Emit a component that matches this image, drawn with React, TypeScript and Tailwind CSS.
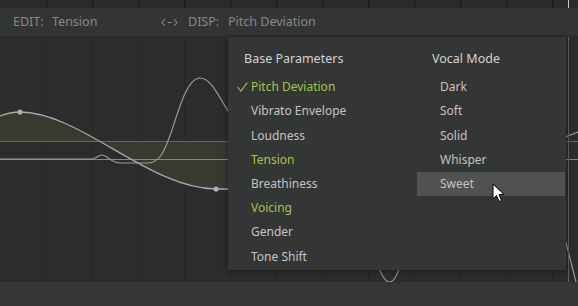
import React from "react";

const gridXs = Array.from({ length: 13 }, (_, i) => (i + 1) * 46);

function Cursor() {
  return (
    <svg width="13" height="20" viewBox="0 0 13 20" className="absolute left-[492px] top-[183px]">
      <path d="M1,1 L1,16 L4.5,12.5 L7,18.5 L9.5,17.5 L7,11.5 L12,11.5 Z" fill="#ffffff" stroke="#000000" strokeWidth="1" strokeLinejoin="miter" />
    </svg>
  );
}

function Row({ children, className = "" }: { children: React.ReactNode; className?: string }) {
  return <div className={"h-[24.2px] flex items-center shrink-0 " + className}>{children}</div>;
}

export default function App() {
  const left: { t: string; green?: boolean; check?: boolean }[] = [
    { t: "Pitch Deviation", green: true, check: true },
    { t: "Vibrato Envelope" },
    { t: "Loudness" },
    { t: "Tension", green: true },
    { t: "Breathiness" },
    { t: "Voicing", green: true },
    { t: "Gender" },
    { t: "Tone Shift" },
  ];
  const right = ["Dark", "Soft", "Solid", "Whisper", "Sweet"];
  return (
    <div
      className="relative w-[578px] h-[306px] overflow-hidden flex flex-col bg-[#2b2c2c] text-[12px]"
      style={{ fontFamily: '"Noto Sans", "Open Sans", sans-serif' }}
    >
      {/* top strip */}
      <div className="h-[8px] shrink-0 bg-[#2a2b2b] relative">
        <svg width="578" height="8" className="block">
          {gridXs.map((x) => (
            <line key={x} x1={x + 0.5} y1="0" x2={x + 0.5} y2="8" stroke="#1c1d1d" />
          ))}
          <line x1="568.5" y1="0" x2="568.5" y2="8" stroke="#c8c8c8" />
        </svg>
      </div>
      {/* toolbar */}
      <div className="h-[29px] shrink-0 bg-[#333534] flex items-center pt-[1px] text-[#878988] text-[12.5px] border-b border-[#2a2b2b]">
        <span className="ml-[13px] w-[39px]">EDIT:</span>
        <span className="w-[109px]">Tension</span>
        <svg width="17" height="9" viewBox="0 0 17 9" className="shrink-0">
          <path d="M4,1 L1,4.5 L4,8" fill="none" stroke="#878988" strokeWidth="1.1" />
          <path d="M13,1 L16,4.5 L13,8" fill="none" stroke="#878988" strokeWidth="1.1" />
          <line x1="6.5" y1="4.5" x2="10.5" y2="4.5" stroke="#878988" strokeWidth="1.1" />
        </svg>
        <span className="ml-[10px] w-[40px]">DISP:</span>
        <span>Pitch Deviation</span>
      </div>
      {/* graph */}
      <div className="relative flex-1">
        <svg width="578" height="245" className="absolute inset-0">
          {gridXs.map((x) => (
            <line key={x} x1={x + 0.5} y1="0" x2={x + 0.5} y2="245" stroke="#262727" />
          ))}
          <path
            d="M0,79 Q10,75 20,75 C80,75 150,152 216,152 L236,152 L236,104 L0,104 Z"
            fill="#363a2f"
          />
          <line x1="0" y1="104.5" x2="578" y2="104.5" stroke="#646e40" strokeWidth="1" />
          <line x1="0" y1="122.5" x2="578" y2="122.5" stroke="#868686" strokeWidth="1" />
          <path
            d="M0,122 L92,122 C96,122 98,118 102,118 C106,118 112,126 120,126 L148,126 C160,126 165,113 172,93 C180,68 188,41 200,41 C212,41 220,63 232,80"
            fill="none"
            stroke="#9a9a9a"
            strokeWidth="1.2"
          />
          <path
            d="M0,79 Q10,75 20,75 C80,75 150,152 216,152 L236,152"
            fill="none"
            stroke="#a8a8a8"
            strokeWidth="1.3"
          />
          <circle cx="20" cy="75" r="2.6" fill="#b0b0b0" />
          <circle cx="216" cy="152" r="2.6" fill="#b0b0b0" />
          <path d="M374,215 Q390,275 404,215" fill="none" stroke="#9a9a9a" strokeWidth="1.2" />
          <path d="M560,102 L578,95" fill="none" stroke="#9a9a9a" strokeWidth="1.2" />
          <path d="M562,190 L576,245" fill="none" stroke="#9a9a9a" strokeWidth="1.2" />
          <line x1="568.5" y1="0" x2="568.5" y2="245" stroke="#606161" />
        </svg>
      </div>
      {/* bottom bar */}
      <div className="h-[24px] shrink-0 bg-[#353736]" />

      {/* dropdown menu */}
      <div className="absolute left-[228px] top-[37px] w-[338px] h-[233px] bg-[#343535] shadow-[0_1px_6px_rgba(0,0,0,0.45)] flex pt-[10px]">
        <div className="w-[189px] flex flex-col">
          <Row className="pl-[16px] text-[#d2d2d2] text-[12.5px]">Base Parameters</Row>
          <div className="h-[4px] shrink-0" />
          {left.map((it) => (
            <Row key={it.t} className={it.green ? "text-[#a2c34c]" : "text-[#c4c4c4]"}>
              <span className="w-[23px] pl-[9px] flex items-center">
                {it.check ? (
                  <svg width="11" height="10" viewBox="0 0 11 10">
                    <path d="M0.7,5 L3.8,9 L10.3,0.6" fill="none" stroke="#a2c34c" strokeWidth="1.1" />
                  </svg>
                ) : null}
              </span>
              <span>{it.t}</span>
            </Row>
          ))}
        </div>
        <div className="flex-1 flex flex-col pr-[1px]">
          <Row className="pl-[15px] text-[#d2d2d2] text-[12.5px]">Vocal Mode</Row>
          <div className="h-[4px] shrink-0" />
          {right.map((t) => (
            <Row
              key={t}
              className={"pl-[23px] text-[#c4c4c4] " + (t === "Sweet" ? "bg-[#505151]" : "")}
            >
              {t}
            </Row>
          ))}
        </div>
      </div>
      <Cursor />
    </div>
  );
}
